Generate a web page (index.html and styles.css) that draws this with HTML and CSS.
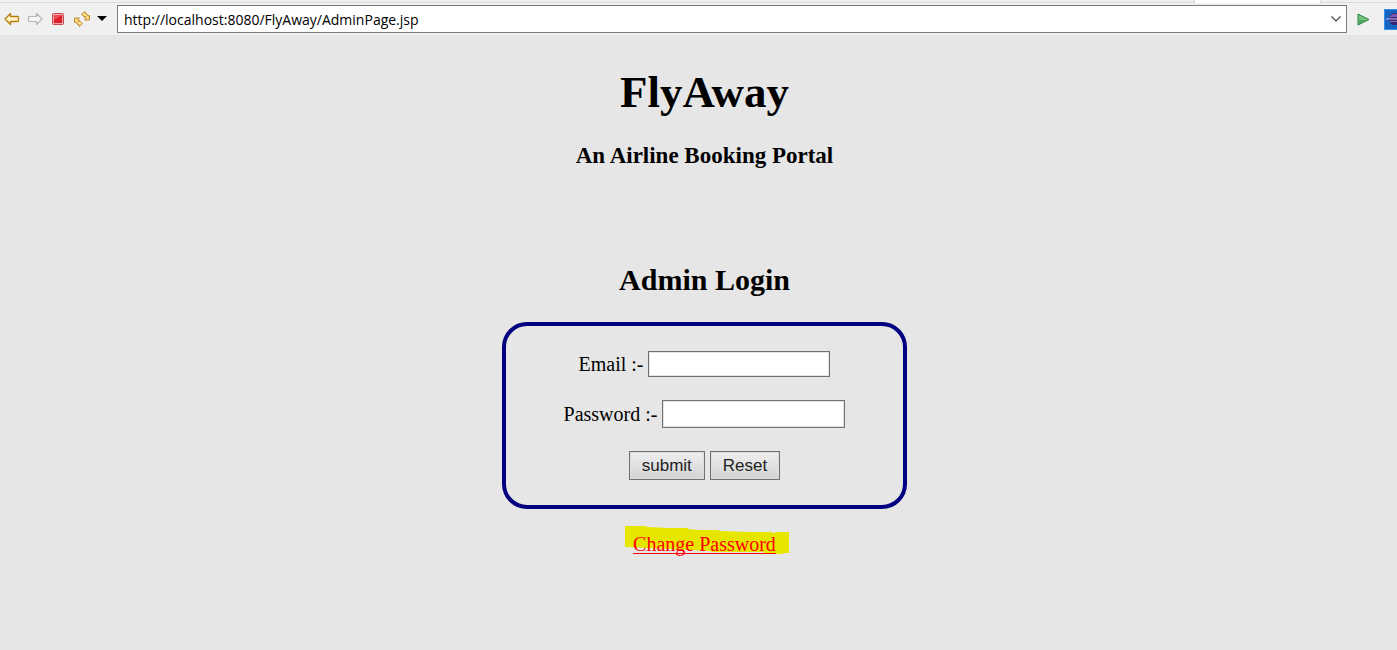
FILE: index.html
```
<!DOCTYPE html>
<html lang="en">
<head>
<meta charset="utf-8">
<title>FlyAway</title>
<link rel="stylesheet" href="styles.css">
</head>
<body>
<div class="tabstrip"><div class="tab"></div></div>
<div class="toolbar">
  <button class="tool" aria-label="Back"><svg width="16" height="16" viewBox="0 0 16 16"><path d="M1 8 6.500 2.500V5.500H13.500Q14.500 5.500 14.500 6.500V9.500Q14.500 10.500 13.500 10.500H6.500V13.500Z" fill="#fff3c4" stroke="#b77a10" stroke-width="1.300" stroke-linejoin="round"/></svg></button>
  <button class="tool" aria-label="Forward"><svg width="16" height="16" viewBox="0 0 16 16"><path d="M15 8 9.500 2.500V5.500H2.500Q1.500 5.500 1.500 6.500V9.500Q1.500 10.500 2.500 10.500H9.500V13.500Z" fill="#f6f6f6" stroke="#b4b4b4" stroke-width="1.200" stroke-linejoin="round"/></svg></button>
  <button class="tool" aria-label="Stop"><svg width="16" height="16" viewBox="0 0 16 16"><rect x="2.500" y="2.500" width="11" height="11" rx="1" fill="#f3a5a5" stroke="#c94a50"/><rect x="4" y="4" width="8" height="8" fill="#df1f2c"/><path d="M4 4H12L4 9Z" fill="#ea4a50"/></svg></button>
  <button class="tool" aria-label="Refresh"><svg width="18" height="16" viewBox="0 0 18 16"><g fill="#ffdf8c" stroke="#c08a28" stroke-linejoin="round"><path d="M8.500 3.500 12 .500V2.300Q14.500 2.500 15 5L16.500 4.500V9H11.500L13 7.500Q12.800 5.500 12 5V6.500Z"/><path d="M9.500 12.500 6 15.500V13.700Q3.500 13.500 3 11L1.500 11.500V7H6.500L5 8.500Q5.200 10.500 6 11V9.500Z"/></g></svg></button>
  <button class="tool menu" aria-label="History"><svg width="10" height="6" viewBox="0 0 10 6"><path d="M0 0H10L5 5Z" fill="#000"/></svg></button>
  <div class="address">
    <input class="url" type="text" aria-label="Address" value="http://localhost:8080/FlyAway/AdminPage.jsp">
    <button class="drop" aria-label="Show addresses"><svg width="10" height="6" viewBox="0 0 10 6"><path d="M.500 .500 5 5 9.500 .500" fill="none" stroke="#444" stroke-width="1.200"/></svg></button>
  </div>
  <button class="tool go" aria-label="Go"><svg width="13" height="13" viewBox="0 0 13 13"><path d="M1 1 12 6.500 1 12Z" fill="#72c47a" stroke="#2b7f49" stroke-linejoin="round"/><path d="M2 7H10L2 11Z" fill="#4aa85e"/></svg></button>
  <button class="tool browser" aria-label="Open external browser"><svg width="13" height="21" viewBox="0 0 13 21"><rect x=".5" y=".5" width="20" height="20" fill="#1763c0" stroke="#2d92e8"/><circle cx="11" cy="10" r="6" fill="#33206e"/><path d="M5 8.500Q8 4 13 5V8Z" fill="#7b5bb0"/><path d="M2 10H13" stroke="#b9a6e0" stroke-width="1.200"/><path d="M6 12.500H13" stroke="#8a70c0"/></svg></button>
</div>
<main class="page">
  <h1 class="brand">FlyAway</h1>
  <h3 class="tagline">An Airline Booking Portal</h3>
  <h2 class="title">Admin Login</h2>
  <form class="login">
    <div class="row"><label for="email">Email :-</label><input class="field" id="email" type="email"></div>
    <div class="row"><label for="password">Password :-</label><input class="field password" id="password" type="password"></div>
    <div class="row"><button class="action" type="submit">submit</button><button class="action" type="reset">Reset</button></div>
  </form>
  <div class="change">
    <svg class="marker" width="164" height="29" viewBox="0 0 164 29"><path d="M0 0H19L23 1 43 2 63 2V3L73 4 94 4V5L126 6 147 6V7H150V6H164V27H158V28H139V26H86V25L0 21Z" fill="#e6e600"/></svg>
    <a class="link" href="#">Change Password</a>
  </div>
</main>
</body>
</html>
```
FILE: styles.css
```
* { box-sizing: border-box; }
body {
  margin: 0;
  background: #e6e6e6;
  color: #000;
  font-family: "Liberation Serif", "Times New Roman", serif;
  font-size: 20px;
  line-height: 24px;
}
.tabstrip {
  display: flex;
  justify-content: flex-end;
  height: 3px;
  padding-right: 76px;
  background: #f0f0f0;
  border-bottom: 1px solid #dcdcdc;
}
.tab {
  width: 127px;
  height: 3px;
  background: #fff;
  border: solid #dcdcdc;
  border-width: 0 1px;
}
.toolbar {
  display: flex;
  align-items: center;
  height: 32px;
  padding-left: 4px;
  background: #f0f0f0;
  overflow: hidden;
}
.tool {
  display: flex;
  flex: none;
  margin: 0 7px 0 0;
  padding: 0;
  border: 0;
  background: none;
}
.tool.menu { margin: 0 10px 0 -1px; }
.address {
  display: flex;
  flex: 1;
  align-items: center;
  height: 28px;
  background: #fff;
  border: 1px solid #7a7a7a;
}
.url {
  flex: 1;
  min-width: 0;
  padding: 0 6px;
  border: 0;
  outline: 0;
  background: none;
  color: #000;
  font: 14px "Open Sans", "Segoe UI", sans-serif;
}
.drop {
  display: flex;
  padding: 0 5px;
  border: 0;
  background: none;
}
.tool.go { margin: 0 14px 0 10px; }
.tool.browser { margin: 0; }
.page {
  display: flex;
  flex-direction: column;
  align-items: center;
  padding: 31px 0 32px 12px;
}
.brand {
  margin: 0;
  font-size: 45px;
  line-height: 52px;
}
.tagline {
  margin: 24px 0 0;
  font-size: 23px;
  line-height: 28px;
}
.title {
  margin: 92px 0 0;
  font-size: 30px;
  line-height: 36px;
}
.login {
  display: flex;
  flex-direction: column;
  gap: 23px;
  width: 405px;
  max-width: 100%;
  margin-top: 24px;
  padding: 25px 0;
  border: 4px solid #000080;
  border-radius: 25px;
}
.row {
  display: flex;
  justify-content: center;
  align-items: center;
  gap: 5px;
}
.field {
  width: 182px;
  height: 26px;
  padding: 2px 4px;
  border: 1px solid #707070;
  border-radius: 0;
  background: #fff;
  box-shadow: inset 0 0 0 1px #e3e3e3;
  font-size: 16px;
}
.field.password { width: 183px; height: 28px; }
.action {
  height: 29px;
  padding: 0 12px;
  border: 1px solid #707070;
  border-radius: 0;
  background: linear-gradient(#efefef, #d3d3d3);
  box-shadow: inset 0 0 0 1px #dcdcdc;
  color: #222;
  font: 17px "Liberation Sans", Arial, sans-serif;
}
.change {
  position: relative;
  margin-top: 23px;
}
.marker {
  position: absolute;
  top: -6px;
  left: -8px;
}
.link {
  position: relative;
  color: #f00;
  text-decoration: underline 1px;
  text-decoration-skip-ink: none;
  text-underline-offset: 2px;
}
```
